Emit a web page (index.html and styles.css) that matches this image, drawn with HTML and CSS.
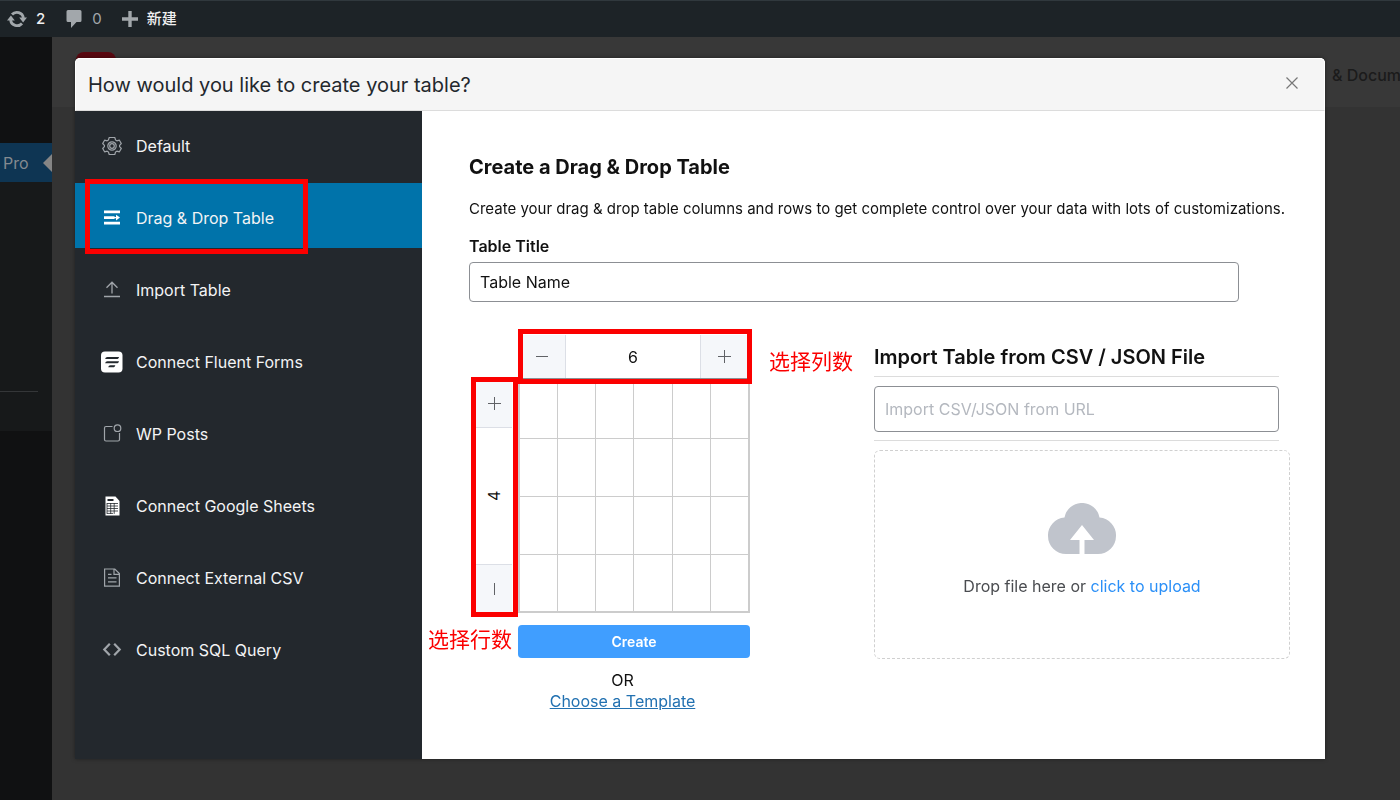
FILE: index.html
```html
<!DOCTYPE html>
<html lang="zh-CN">
<head>
  <meta charset="UTF-8" />
  <meta name="viewport" content="width=device-width, initial-scale=1.0" />
  <title>Create Table</title>
  <link rel="stylesheet" href="styles.css">
</head>
<body>
  <header class="adminbar">
    <a href="#" class="bar-item">
      <svg width="20" height="20" viewBox="0 0 20 20" fill="none" stroke="currentColor" stroke-width="2.8"><path d="M5 5.500A6.600 6.600 0 0 1 16.400 9M15 14.500A6.600 6.600 0 0 1 3.600 11"/><path d="M12.200 8.500h7.800l-3.900 5z M0 11.500h7.800l-3.900-5z" fill="currentColor" stroke="none"/></svg>
      <span class="bar-strong">2</span>
    </a>
    <a href="#" class="bar-item bar-comments">
      <svg width="18" height="20" viewBox="0 0 18 20" fill="currentColor"><path d="M3 1h12a1.500 1.500 0 0 1 1.500 1.500v9A1.500 1.500 0 0 1 15 13h-3.500L6 19v-6H3a1.500 1.500 0 0 1-1.500-1.500v-9A1.500 1.500 0 0 1 3 1z"/></svg>
      <span>0</span>
    </a>
    <a href="#" class="bar-item">
      <svg width="16" height="16" viewBox="0 0 16 16" fill="currentColor"><path d="M6.300 0h3.400v6.300H16v3.400H9.700V16H6.300V9.700H0V6.300h6.300z"/></svg>
      <span class="bar-strong">新建</span>
    </a>
  </header>

  <div class="admin">
    <nav class="adminmenu">
      <a href="#" class="menu-current">Pro</a>
      <div class="submenu"></div>
    </nav>
    <div class="page">
      <div class="page-top">
        <span class="logo"></span>
        <a href="#" class="page-link">&amp; Docum</a>
      </div>
    </div>
  </div>

  <div class="overlay">
    <div class="modal" role="dialog" aria-labelledby="modal-title">
      <div class="modal-head">
        <h2 id="modal-title">How would you like to create your table?</h2>
        <button type="button" class="close" aria-label="Close">
          <svg width="12" height="12" viewBox="0 0 12 12" fill="none" stroke="currentColor" stroke-width="1.200"><path d="M.5.5l11 11M11.500.5l-11 11"/></svg>
        </button>
      </div>

      <div class="modal-body">
        <nav class="types">
          <a href="#" class="type">
            <svg width="20" height="20" viewBox="0 0 20 20" fill="none" stroke="currentColor" stroke-width="1.200"><path d="M7.200 1.500h5.600l.8 2.600 1.200.7 2.600-.6 1.900 3.300-1.700 1.800v1.400l1.700 1.800-1.900 3.300-2.600-.6-1.200.7-.8 2.600H7.200l-.8-2.600-1.200-.7-2.600.6-1.900-3.300 1.700-1.800V9.300L.7 7.500l1.900-3.300 2.600.6 1.200-.7z" stroke-linejoin="round"/><circle cx="10" cy="10" r="4.200"/><circle cx="10" cy="10" r="2.300"/></svg>
            Default
          </a>
          <a href="#" class="type active">
            <svg width="20" height="20" viewBox="0 0 20 20" fill="currentColor"><path d="M2 2.500h16v2.700H2zM2 8.200h10.500v2.700H2zM2 13.800h16v2.700H2zM14 6.700l4 2.900-4 2.900v-2.200h-2V8.900h2z"/></svg>
            Drag &amp; Drop Table
            <span class="mark mark-type"></span>
          </a>
          <a href="#" class="type">
            <svg width="20" height="20" viewBox="0 0 20 20" fill="none" stroke="currentColor" stroke-width="1.300"><path d="M2 16.500h16M10 13.500V2.500M4.500 7.700L10 2.200l5.500 5.500"/></svg>
            Import Table
          </a>
          <a href="#" class="type">
            <svg class="icon-solid" width="22" height="22" viewBox="0 0 22 22"><rect y=".5" width="21.500" height="21" rx="4" fill="#fff"/><path d="M6.500 6H18c-.3 1.500-1 2-2.200 2H4.200C4.400 6.700 5.200 6 6.500 6zM6.500 10.200H18c-.3 1.500-1 2-2.200 2H4.200c.2-1.300 1-2 2.300-2zM9.500 14.300h4.800c-.3 1.500-1 2-2.200 2H7.300c.2-1.300.9-2 2.200-2z" fill="#23282d"/></svg>
            Connect Fluent Forms
          </a>
          <a href="#" class="type">
            <svg width="20" height="20" viewBox="0 0 20 20" fill="none" stroke="currentColor" stroke-width="1.200"><path d="M10.500 2.500H4A1.500 1.500 0 0 0 2.500 4v11.500A1.500 1.500 0 0 0 4 17h12a1.500 1.500 0 0 0 1.500-1.500V9"/><circle cx="15.500" cy="4.200" r="3.300"/></svg>
            WP Posts
          </a>
          <a href="#" class="type">
            <svg class="icon-solid" width="20" height="20" viewBox="0 0 20 20"><path d="M3.500.5h10l4 4.500v14.500h-14z" fill="#fff"/><path d="M5.500 3h6v2h-6z" fill="#23282d"/><path d="M5 7.500h11M5 10h11M5 12.500h11M5 15h11M5 17.400h6M5 7v10.900M8.700 7v10.900M12.200 7v10.900" stroke="#23282d" stroke-width=".8"/></svg>
            Connect Google Sheets
          </a>
          <a href="#" class="type">
            <svg width="20" height="20" viewBox="0 0 20 20" fill="none" stroke="currentColor" stroke-width="1.200"><path d="M2.600 1h10.200l4.600 4.600v12.600H2.600zM12 1.300v5h5M6 6.300h3.500M6 9.800h8.500M6 13.800h8.500"/></svg>
            Connect External CSV
          </a>
          <a href="#" class="type">
            <svg width="20" height="20" viewBox="0 0 20 20" fill="none" stroke="currentColor" stroke-width="2.200"><path d="M7.800 3.800L2.300 9.500l5.500 5.700M12.200 3.800l5.500 5.700-5.500 5.700"/></svg>
            Custom SQL Query
          </a>
        </nav>

        <main class="content">
          <h3 class="content-title">Create a Drag &amp; Drop Table</h3>
          <p class="desc">Create your drag &amp; drop table columns and rows to get complete control over your data with lots of customizations.</p>
          <label class="field-label" for="table-title">Table Title</label>
          <input id="table-title" class="title-input" type="text" value="Table Name" />

          <div class="columns">
            <section class="builder">
              <div class="stepper stepper-cols">
                <button type="button" aria-label="Remove column">
                  <svg width="12" height="12" viewBox="0 0 12 12" stroke="currentColor"><path d="M0 5.500h12"/></svg>
                </button>
                <input type="text" value="6" aria-label="Columns" />
                <button type="button" aria-label="Add column">
                  <svg width="13" height="13" viewBox="0 0 13 13" stroke="currentColor"><path d="M0 6.500h13M6.500 0v13"/></svg>
                </button>
                <span class="mark mark-cols"></span>
                <span class="note note-cols">选择列数</span>
              </div>
              <div class="stepper stepper-rows">
                <button type="button" aria-label="Add row">
                  <svg width="13" height="13" viewBox="0 0 13 13" stroke="currentColor"><path d="M0 6.500h13M6.500 0v13"/></svg>
                </button>
                <input type="text" value="4" aria-label="Rows" />
                <button type="button" aria-label="Remove row">
                  <svg width="12" height="12" viewBox="0 0 12 12" stroke="currentColor"><path d="M6.500 0v12"/></svg>
                </button>
                <span class="mark mark-rows"></span>
                <span class="note note-rows">选择行数</span>
              </div>
              <table class="preview">
                <tr><td></td><td></td><td></td><td></td><td></td><td></td></tr>
                <tr><td></td><td></td><td></td><td></td><td></td><td></td></tr>
                <tr><td></td><td></td><td></td><td></td><td></td><td></td></tr>
                <tr><td></td><td></td><td></td><td></td><td></td><td></td></tr>
              </table>
              <button type="button" class="create">Create</button>
              <div class="or">
                OR<br />
                <a href="#">Choose a Template</a>
              </div>
            </section>

            <section class="import">
              <h3>Import Table from CSV / JSON File</h3>
              <div class="url-row">
                <input type="text" placeholder="Import CSV/JSON from URL" aria-label="Import CSV/JSON from URL" />
              </div>
              <div class="drop">
                <svg width="68" height="52" viewBox="0 0 68 52" fill="#c0c4cc"><path d="M16.500 14.500a17.800 17.800 0 0 1 35 0A18 18 0 0 1 68 33a18 18 0 0 1-18 18H36.500V37H46L34 22 22 37h9.500v14H18A18 18 0 0 1 0 33a18 18 0 0 1 16.500-18.500z"/></svg>
                <p>Drop file here or <a href="#">click to upload</a></p>
              </div>
            </section>
          </div>
        </main>
      </div>
    </div>
  </div>
</body>
</html>
```

FILE: styles.css
```css
* { box-sizing: border-box; }
body {
  margin: 0;
  min-height: 100vh;
  display: flex;
  flex-direction: column;
  overflow: hidden;
  font-family: Inter, "Noto Sans CJK SC", sans-serif;
  font-size: 16px;
  line-height: 24px;
  color: #111;
  background: #333;
}
a { text-decoration: none; color: inherit; }
h2, h3, p { margin: 0; }
button, input { font: inherit; color: inherit; }
button { padding: 0; border: none; cursor: pointer; }
svg { display: block; flex: none; }

/* admin bar */
.adminbar {
  height: 37px;
  padding: 0 7px;
  display: flex;
  align-items: center;
  gap: 20px;
  background: #1d2327;
  border-top: 1px solid #30383d;
  color: #a2a7ab;
  font-size: 15px;
}
.bar-item { display: flex; align-items: center; gap: 9px; }
.bar-strong { color: #f0f0f1; font-weight: 500; }

/* page behind the dialog */
.admin { flex: 1; display: flex; }
.adminmenu { width: 52px; padding-top: 106px; background: #101112; }
.menu-current {
  height: 39px;
  padding-left: 3px;
  display: flex;
  align-items: center;
  justify-content: space-between;
  background: #0e3553;
  color: #848a90;
}
.menu-current::after {
  content: "";
  border: 9px solid transparent;
  border-right-color: #858585;
  border-left: none;
}
.submenu { height: 249px; padding-top: 209px; background: #17191a; }
.submenu::after { content: ""; display: block; width: 38px; height: 1px; background: #343638; }
.page { flex: 1; }
.page-top {
  height: 70px;
  padding-left: 24px;
  display: flex;
  align-items: center;
  justify-content: space-between;
  background: #383838;
}
.logo { width: 40px; height: 40px; background: #5a0810; border-radius: 8px; }
.page-link { width: 68px; padding-top: 6px; color: #1b1b1b; font-weight: 500; white-space: nowrap; }

/* dialog */
.overlay { position: fixed; inset: 0; padding: 58px 75px 41px; }
.modal {
  height: 100%;
  display: flex;
  flex-direction: column;
  background: #fff;
  border-radius: 5px 5px 0 0;
  box-shadow: 0 0 4px rgba(0,0,0,0.4);
}
.modal-head {
  height: 53px;
  padding: 0 26px 0 12px;
  display: flex;
  align-items: center;
  justify-content: space-between;
  background: #f5f5f5;
  border: 1px solid #fff;
  border-bottom-color: #dcdcdc;
  border-radius: 5px 5px 0 0;
}
.modal-head h2 { font-size: 20px; font-weight: 400; color: #23282d; }
.close { padding-bottom: 4px; background: none; color: #777; }
.modal-body { flex: 1; display: flex; }

.types { width: 347px; background: #23282d; color: #f3f4f5; }
.type {
  position: relative;
  height: 65px;
  margin-bottom: 7px;
  padding: 5px 0 0 27px;
  display: flex;
  align-items: center;
  gap: 14px;
}
.type svg { color: #a0a5aa; }
.type .icon-solid { width: 22px; margin: 0 -1px; }
.type.active { background: #0073aa; }
.type.active svg { color: #fff; }

/* red highlights and their notes */
.mark { position: absolute; border: 5px solid #fb0000; pointer-events: none; }
.note { position: absolute; color: #fb0000; font-size: 21px; white-space: nowrap; }
.mark-type { left: 10px; top: -4px; width: 223px; height: 75px; }
.mark-cols { inset: -6px -4px -6px 0; }
.mark-rows { inset: -2px 0 -4px 2px; }
.note-cols { left: 251px; top: 15px; }
.note-rows { right: 6px; bottom: -39px; }

.content { flex: 1; padding: 44px 35px 0 47px; }
.content h3 { font-size: 20px; font-weight: 600; }
.content .content-title { font-weight: 700; }
.desc { margin-top: 18px; font-size: 15px; white-space: nowrap; }
.field-label { display: block; margin-top: 13px; font-weight: 600; }
.title-input {
  display: block;
  width: calc(100% - 51px);
  height: 40px;
  margin-top: 4px;
  padding: 0 10px;
  border: 1px solid #8c8f94;
  border-radius: 4px;
}

.columns {
  margin-top: 33px;
  display: grid;
  grid-template-columns: 307px 1fr;
  gap: 98px;
}
.builder {
  display: grid;
  grid-template-columns: 49px 232px;
  grid-template-rows: 44px auto;
  align-content: start;
}
.stepper { position: relative; display: flex; }
.stepper button { display: grid; place-items: center; background: #f5f7fa; color: #606266; }
.stepper input { flex: 1; min-width: 0; min-height: 0; padding: 0; border: solid #dcdfe6; text-align: center; background: #fff; }
.stepper-cols { grid-column: 2; margin-right: 2px; border-bottom: 1px solid #8c8f94; }
.stepper-cols button { width: 47px; }
.stepper-cols input { border-width: 0 1px; }
.stepper-rows { flex-direction: column; padding: 0 6px 0 7px; }
.stepper-rows button { height: 48px; }
.stepper-rows input { border-width: 1px 0; writing-mode: vertical-rl; transform: rotate(180deg); }

.preview { width: 232px; border-collapse: collapse; table-layout: fixed; border: 2px solid #ccc; }
.preview td { height: 58px; padding: 0; border: 1px solid #ccc; }
.create {
  grid-column: 2;
  height: 33px;
  margin-top: 12px;
  border-radius: 4px;
  background: #409eff;
  color: #fff;
  font-size: 14px;
  font-weight: 600;
}
.or { width: 307px; margin-top: 12px; line-height: 21px; text-align: center; }
.or a { color: #2271b1; text-decoration: underline; }

.import { padding-top: 10px; }
.url-row {
  margin: 7px 11px 0 0;
  padding: 9px 0 8px;
  border: solid #dcdcdc;
  border-width: 1px 0;
}
.url-row input {
  display: block;
  width: 100%;
  height: 46px;
  padding: 0 10px;
  border: 1px solid #8c8f94;
  border-radius: 4px;
}
.url-row input::placeholder { color: #b4b8bf; }
.drop {
  height: 209px;
  margin-top: 9px;
  padding-top: 52px;
  display: flex;
  flex-direction: column;
  align-items: center;
  gap: 19px;
  border: 1px dashed #d0d0d0;
  border-radius: 6px;
  color: #4a4c50;
}
.drop a { color: #2a8ff7; }
```
